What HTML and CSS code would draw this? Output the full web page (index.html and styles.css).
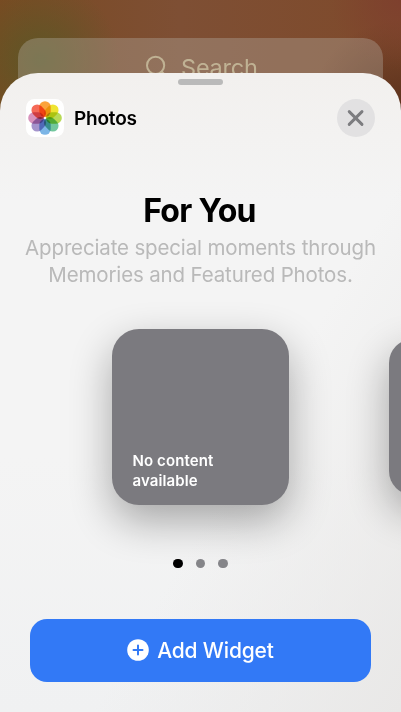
FILE: index.html
```html
<!DOCTYPE html>
<html lang="en">
<head>
    <meta charset="UTF-8">
    <meta name="viewport" content="width=device-width, initial-scale=1.0">
    <title>Photos Widget</title>
    <link rel="stylesheet" href="styles.css">
</head>
<body>
    <div class="search">
        <svg class="search-icon" width="24" height="24" viewBox="0 0 24 24">
            <circle cx="9.6" cy="10.4" r="8.6"/>
            <path d="M15.8 16.6l6 6"/>
        </svg>
        <span>Search</span>
    </div>
    <div class="sheet">
        <div class="grabber"></div>
        <div class="header">
            <svg class="app-icon" width="38" height="38" viewBox="-19 -19 38 38">
                <rect x="-19" y="-19" width="38" height="38" rx="8.5" fill="#fff"/>
                <g class="petals">
                    <rect x="-5.7" y="-16.8" width="11.4" height="15.8" rx="5.7" fill="#fba33c"/>
                    <rect x="-5.7" y="-16.8" width="11.4" height="15.8" rx="5.7" fill="#efe433" transform="rotate(45)"/>
                    <rect x="-5.7" y="-16.8" width="11.4" height="15.8" rx="5.7" fill="#b8da55" transform="rotate(90)"/>
                    <rect x="-5.7" y="-16.8" width="11.4" height="15.8" rx="5.7" fill="#72c79d" transform="rotate(135)"/>
                    <rect x="-5.7" y="-16.8" width="11.4" height="15.8" rx="5.7" fill="#7cb5e6" transform="rotate(180)"/>
                    <rect x="-5.7" y="-16.8" width="11.4" height="15.8" rx="5.7" fill="#a594cc" transform="rotate(225)"/>
                    <rect x="-5.7" y="-16.8" width="11.4" height="15.8" rx="5.7" fill="#d893bc" transform="rotate(270)"/>
                    <rect x="-5.7" y="-16.8" width="11.4" height="15.8" rx="5.7" fill="#f56a58" transform="rotate(315)"/>
                </g>
            </svg>
            <span class="app-name">Photos</span>
            <button class="close" aria-label="Close">
                <svg width="38" height="38" viewBox="0 0 38 38">
                    <path d="M12.2 12.6l12.8 12.8M25 12.6L12.2 25.4"/>
                </svg>
            </button>
        </div>
        <h1>For You</h1>
        <p class="description">Appreciate special moments through<br>Memories and Featured Photos.</p>
        <div class="widgets">
            <div class="widget">No content<br>available</div>
            <div class="widget next"></div>
        </div>
        <div class="dots">
            <span class="dot active"></span>
            <span class="dot"></span>
            <span class="dot"></span>
        </div>
        <button class="add">
            <svg width="22" height="22" viewBox="0 0 22 22">
                <circle cx="11" cy="11" r="10.8" fill="#fff"/>
                <path d="M11 6.5v9M6.5 11h9"/>
            </svg>
            <span>Add Widget</span>
        </button>
    </div>
</body>
</html>
```

FILE: styles.css
```css
* {
    box-sizing: border-box;
}
body {
    margin: 0;
    height: 712px;
    padding-top: 38px;
    overflow: hidden;
    font-family: Inter, 'Liberation Sans', sans-serif;
    background:
        radial-gradient(circle at 40px 60px, rgba(86, 90, 38, 0.8), rgba(86, 90, 38, 0) 80px),
        radial-gradient(circle at 401px 0, #7e402e, rgba(126, 64, 46, 0) 70px),
        radial-gradient(circle at 401px 110px, #5a301c, rgba(90, 48, 28, 0) 90px),
        linear-gradient(to right, #7a4a22, #7e4f34 45%, #7f4a2b);
}
.search {
    display: flex;
    margin: 0 18px;
    height: 60px;
    padding: 16px 0 0 128px;
    border-radius: 20px;
    background: rgba(184, 182, 174, 0.34);
    color: #c0b294;
    font-size: 23.5px;
    line-height: 28px;
}
.search-icon {
    margin: 1px 11px 0 0;
    fill: none;
    stroke: #c0b294;
    stroke-width: 2;
    stroke-linecap: round;
}
.search span {
    letter-spacing: -0.2px;
}
.sheet {
    position: relative;
    display: flex;
    flex-direction: column;
    align-items: center;
    height: 639px;
    margin-top: -25px;
    border-radius: 38px 38px 0 0;
    background: linear-gradient(120deg, rgba(244, 244, 245, 0) 60%, #e9e8e7), linear-gradient(#f2f0ee, #f4f4f4 20%, #f4f4f4 60%, #f0f1f2);
    overflow: hidden;
}
.grabber {
    width: 45px;
    height: 6px;
    margin-top: 5.5px;
    border-radius: 3px;
    background: #bababa;
}
.header {
    display: flex;
    align-items: center;
    align-self: stretch;
    height: 38px;
    margin: 14.5px 26px 0;
}
.petals {
    isolation: isolate;
}
.petals rect {
    mix-blend-mode: multiply;
}
.app-name {
    margin-left: 10px;
    font-size: 19px;
    font-weight: 600;
    letter-spacing: -0.2px;
    color: #000;
}
.close {
    width: 38px;
    height: 38px;
    margin-left: auto;
    padding: 0;
    border: none;
    border-radius: 50%;
    background: #e2e1e2;
}
.close svg {
    display: block;
    fill: none;
    stroke: #7d7d80;
    stroke-width: 2.9;
    stroke-linecap: round;
}
h1 {
    margin: 54px 0 0;
    padding-right: 2px;
    font-size: 32px;
    line-height: 40px;
    font-weight: 700;
    letter-spacing: -0.7px;
    color: #000;
}
.description {
    margin: 3px 0 0;
    font-size: 20.5px;
    line-height: 27px;
    letter-spacing: -0.15px;
    text-align: center;
    white-space: nowrap;
    color: #b9b9b9;
}
.widgets {
    display: flex;
    align-items: center;
    align-self: stretch;
    margin-top: 40.5px;
    padding-left: 112px;
}
.widget {
    display: flex;
    flex: none;
    align-items: flex-end;
    width: 177px;
    height: 176.5px;
    padding: 0 20.5px 14px;
    border-radius: 27px;
    background: #7b7a7f;
    box-shadow: 0 16px 42px rgba(0, 0, 0, 0.32);
    color: #fff;
    font-size: 15px;
    line-height: 20px;
    font-weight: 600;
    letter-spacing: 0.1px;
}
.next {
    width: 156px;
    height: 156px;
    margin-left: 99.5px;
    border-radius: 24px;
}
.dots {
    display: flex;
    gap: 13px;
    margin-top: 53.7px;
}
.dot {
    width: 9.6px;
    height: 9.6px;
    border-radius: 50%;
    background: #858589;
}
.dot.active {
    background: #000;
}
.add {
    display: flex;
    align-items: center;
    justify-content: center;
    gap: 8px;
    width: 341px;
    height: 63px;
    margin-top: 50.7px;
    padding: 0;
    border: none;
    border-radius: 17px;
    background: #3279f6;
    color: #fff;
    font-family: inherit;
    font-size: 21px;
    font-weight: 500;
    letter-spacing: -0.15px;
}
.add path {
    stroke: #3279f6;
    stroke-width: 2;
    stroke-linecap: round;
}
```
